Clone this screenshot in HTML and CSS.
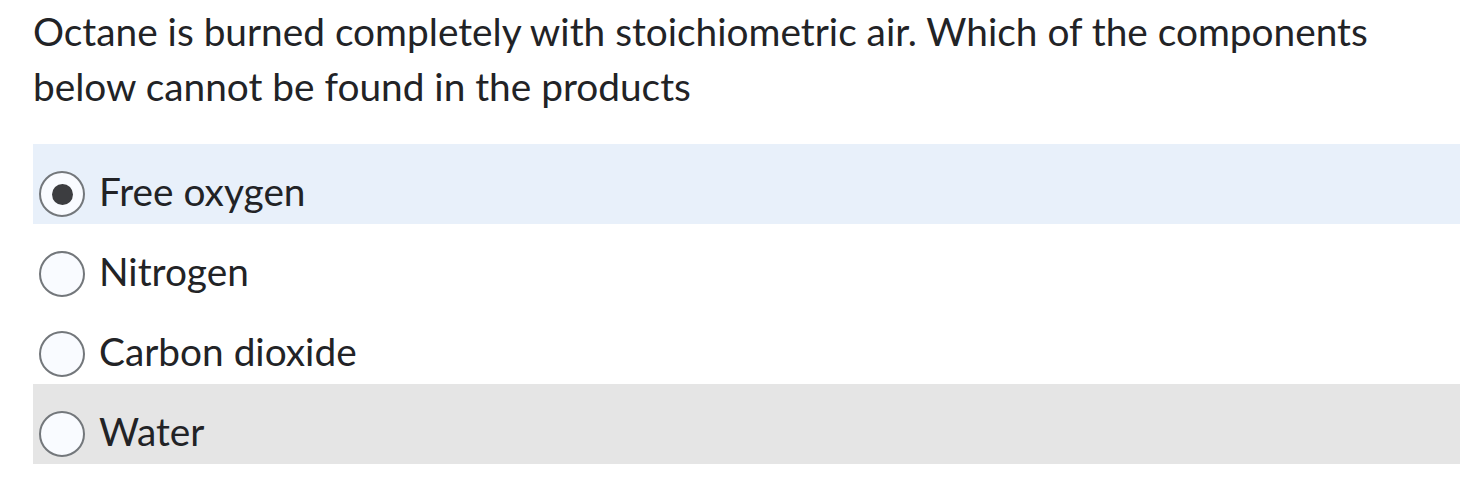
FILE: index.html
```html
<!DOCTYPE html>
<html>
<head>
<meta charset="utf-8">
<link rel="stylesheet" href="styles.css">
</head>
<body>
<div class="quiz">
  <p class="question">Octane is burned completely with stoichiometric air. Which of the components below cannot be found in the products</p>
  <div class="options">
    <label class="option selected"><span class="radio checked"></span><span class="label">Free oxygen</span></label>
    <label class="option"><span class="radio"></span><span class="label">Nitrogen</span></label>
    <label class="option"><span class="radio"></span><span class="label">Carbon dioxide</span></label>
    <label class="option hover"><span class="radio"></span><span class="label">Water</span></label>
  </div>
</div>
</body>
</html>
```

FILE: styles.css
```css
html, body {
  margin: 0;
  padding: 0;
  background: #ffffff;
}
.quiz {
  padding: 4px 0 0 33px;
  font-family: Lato, "Liberation Sans", sans-serif;
  color: #222326;
  font-size: 38.8px;
  line-height: 55px;
}
.question {
  margin: 0 0 30px 0;
  padding-right: 60px;
}
.options {
  display: flex;
  flex-direction: column;
}
.option {
  display: flex;
  align-items: flex-start;
  height: 80px;
  box-sizing: border-box;
  padding-left: 6px;
  line-height: 54px;
}
.option.selected {
  background: #e8f0fa;
}
.option.hover {
  background: #e5e5e5;
}
.radio {
  width: 46px;
  height: 46px;
  margin-top: 27px;
  box-sizing: border-box;
  border: 2px solid #73777b;
  border-radius: 50%;
  background: #f9fbff;
  display: flex;
  align-items: center;
  justify-content: center;
  flex: none;
}
.radio.checked::after {
  content: "";
  width: 21px;
  height: 21px;
  border-radius: 50%;
  background: #3c3d40;
}
.label {
  margin: 20px 0 0 14px;
}
```
